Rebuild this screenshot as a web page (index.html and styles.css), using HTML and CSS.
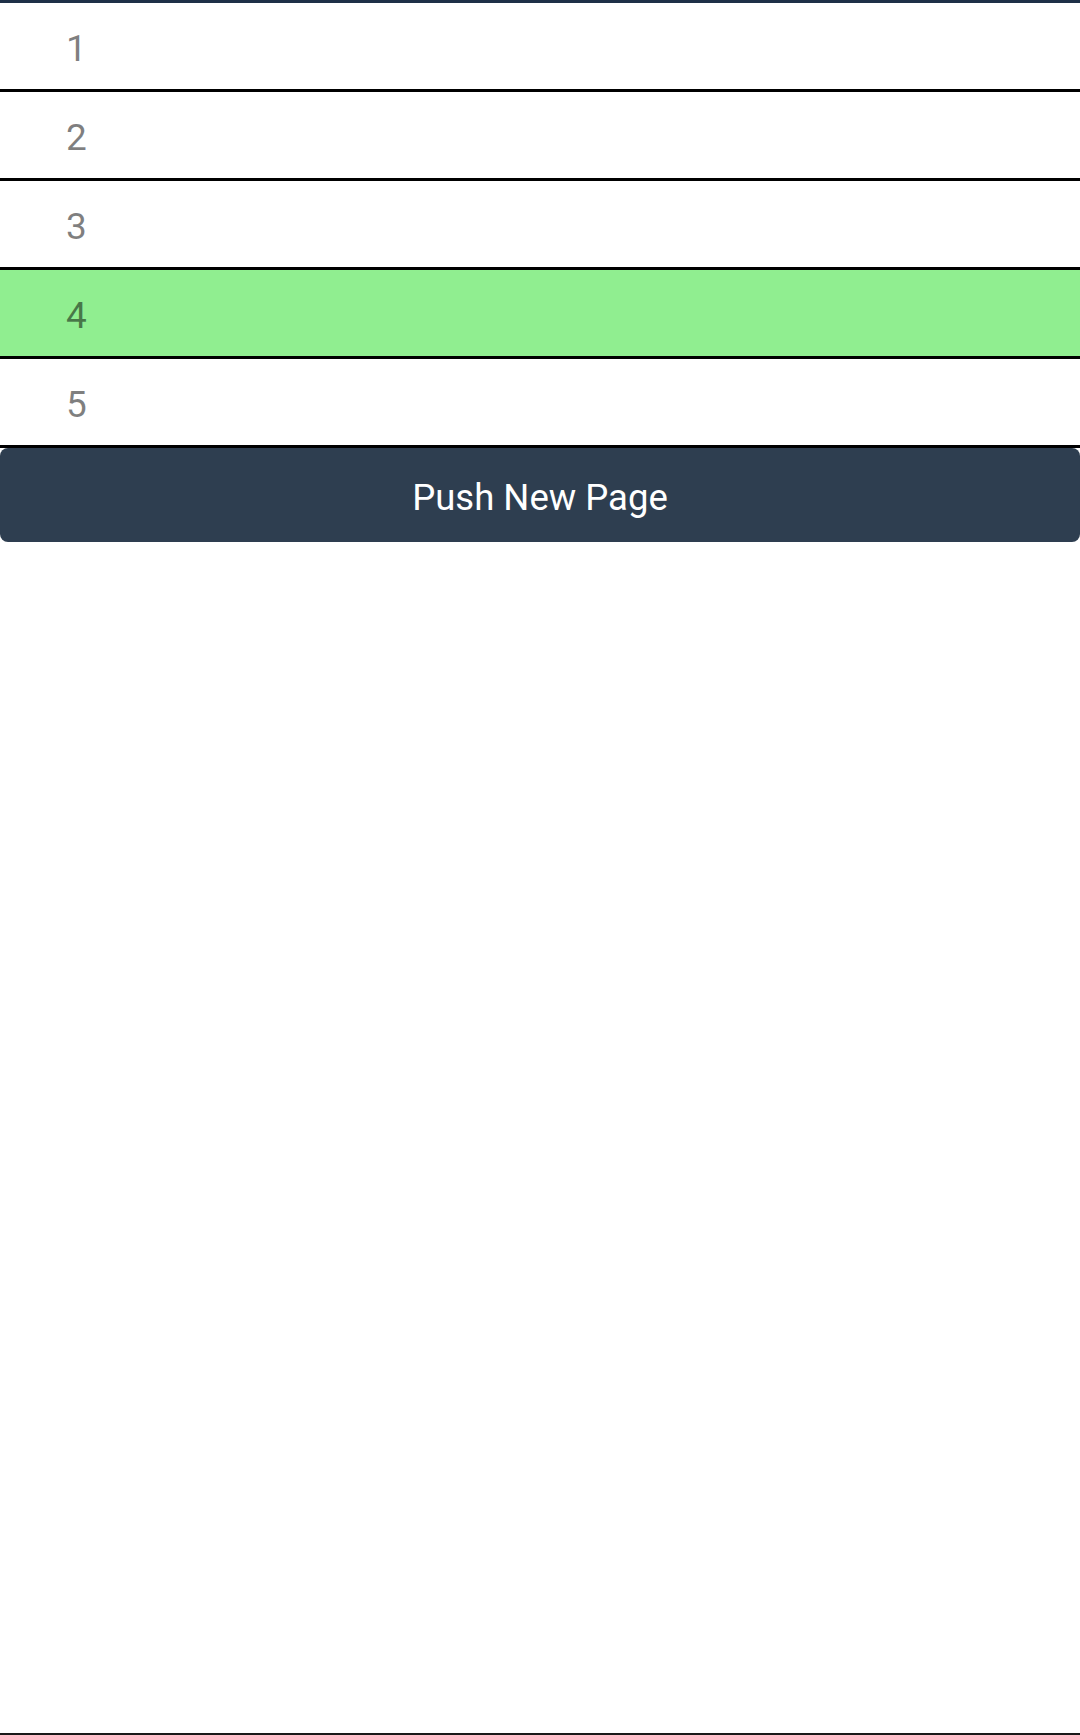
FILE: index.html
```html
<!DOCTYPE html>
<html>
<head>
<meta charset="utf-8">
<link rel="stylesheet" href="styles.css">
</head>
<body>
<div class="page">
  <div class="topbar"></div>
  <ul class="list">
    <li class="row">1</li>
    <li class="row">2</li>
    <li class="row">3</li>
    <li class="row active">4</li>
    <li class="row">5</li>
  </ul>
  <button class="push">Push New Page</button>
  <div class="spacer"></div>
  <div class="bottomline"></div>
</div>
</body>
</html>
```
FILE: styles.css
```css
html, body {
  margin: 0;
  padding: 0;
  background: #ffffff;
}
body {
  font-family: Roboto, "Liberation Sans", sans-serif;
}
.page {
  display: flex;
  flex-direction: column;
  height: 1735px;
  width: 1080px;
}
.topbar {
  height: 3px;
  background: #1e3047;
}
.list {
  list-style: none;
  margin: 0;
  padding: 0;
}
.row {
  height: 82px;
  padding-top: 4px;
  border-bottom: 3px solid #000;
  display: flex;
  align-items: center;
  padding-left: 66px;
  font-size: 37px;
  color: rgba(0, 0, 0, 0.5);
  box-sizing: content-box;
}
.row.active {
  background: #90ee90;
}
.push {
  height: 94px;
  width: 100%;
  border: none;
  border-radius: 8px;
  background: #2e3e50;
  color: #ffffff;
  font-family: Roboto, "Liberation Sans", sans-serif;
  font-size: 36.5px;
  padding: 5px 0 0 0;
  margin: 0;
}
.spacer {
  flex: 1;
}
.bottomline {
  height: 2px;
  background: #1a1a1a;
}
```
